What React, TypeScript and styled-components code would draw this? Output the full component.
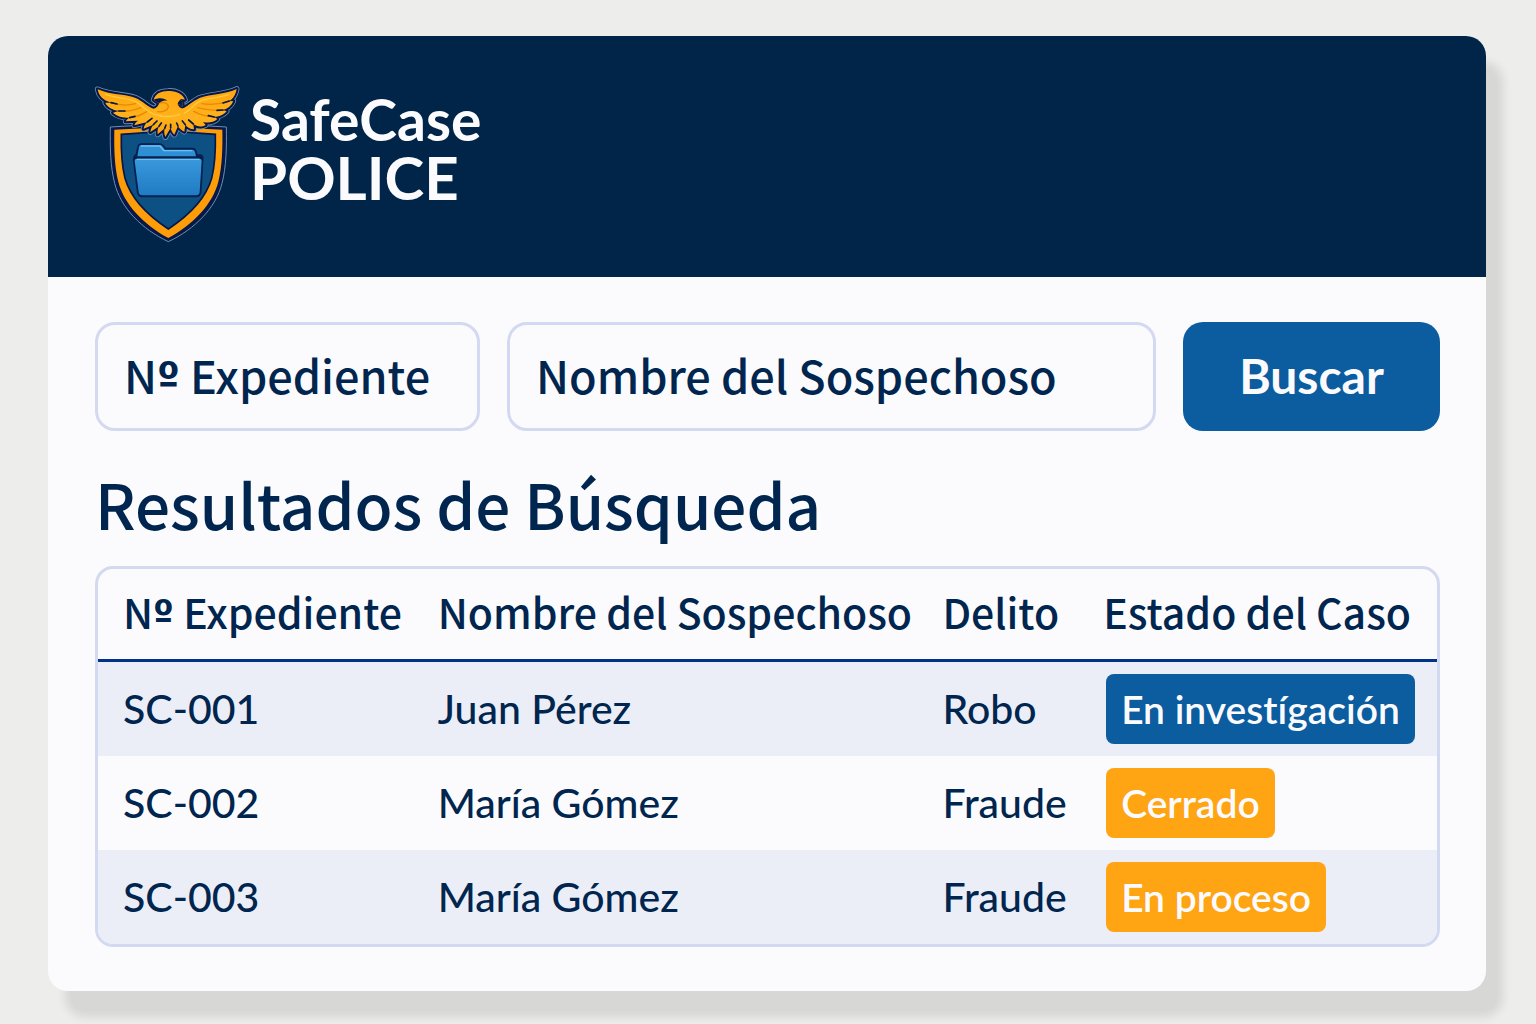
import React from "react";
import styled, { createGlobalStyle, css } from "styled-components";

const color = {
  navy: "#002548",
  ink: "#00264f",
  blue: "#0c5ca0",
  amber: "#ffa412",
  surface: "#fbfbfd",
  stripe: "#eceef7",
  border: "#d3d9f0",
  rule: "#00328a",
};

const sans = `"Noto Sans CJK SC", "Noto Sans", sans-serif`;
const lato = `Lato, "Noto Sans", sans-serif`;

const GlobalStyle = createGlobalStyle`
  *, *::before, *::after { box-sizing: border-box; }
  body {
    margin: 0;
    background: #ededec;
    color: ${color.ink};
    font-family: ${sans};
  }
`;

const Page = styled.div`
  padding: 36px 50px 33px 48px;
`;

const Card = styled.main`
  border-radius: 20px;
  background: ${color.surface};
  box-shadow: 17px 26px 8px rgba(40, 36, 32, 0.11);
`;

const Header = styled.header`
  display: flex;
  align-items: flex-start;
  gap: 10px;
  padding: 49px 46px 34px;
  border-radius: 20px 20px 0 0;
  background: ${color.navy};
`;

const Logo = styled.svg`
  display: block;
  flex: none;
  width: 146px;
  height: 158px;
`;

const Wordmark = styled.h1`
  display: flex;
  flex-direction: column;
  margin: 5px 0 0;
  color: ${color.surface};
  font-family: ${lato};
  font-size: 57px;
  font-weight: 700;
  line-height: 58px;
`;

const WordmarkCaps = styled.span`
  font-size: 60px;
`;

const Content = styled.div`
  padding: 45px 46px 44px 47px;
`;

const SearchForm = styled.form`
  display: grid;
  grid-template-columns: 385fr 649fr 257fr;
  gap: 27px;
`;

const Field = styled.div`
  display: grid;
  height: 109px;
  border: 3px solid ${color.border};
  border-radius: 20px;
  background: ${color.surface};

  &:focus-within {
    border-color: ${color.blue};
  }
`;

const fieldText = css`
  grid-area: 1 / 1;
  min-width: 0;
  padding: 0 26px 4px;
  font-family: ${sans};
  font-size: 45px;
  font-weight: 500;
  line-height: 99px;
`;

const FieldInput = styled.input`
  ${fieldText}
  width: 100%;
  border: 0;
  outline: 0;
  background: transparent;
  color: ${color.ink};

  &:not(:placeholder-shown) + label {
    visibility: hidden;
  }
`;

const FieldLabel = styled.label`
  ${fieldText}
  pointer-events: none;
  white-space: nowrap;
`;

const Ordinal = styled.span`
  font-family: "DejaVu Sans Condensed", "DejaVu Sans", sans-serif;
  font-weight: 700;
  line-height: 1px;
`;

const SearchButton = styled.button`
  padding: 0 0 2px;
  border: 0;
  border-radius: 20px;
  background: ${color.blue};
  color: ${color.surface};
  font-family: ${lato};
  font-size: 48px;
  font-weight: 700;
  cursor: pointer;
`;

const Title = styled.h2`
  margin: 35px 0 26px;
  font-size: 62px;
  font-weight: 500;
  line-height: 74px;
`;

const TableFrame = styled.div`
  overflow: hidden;
  border: 3px solid ${color.border};
  border-radius: 18px;
`;

const Table = styled.table`
  width: 100%;
  border-collapse: separate;
  border-spacing: 0;
  table-layout: fixed;
`;

const Column = styled.col<{ $share?: number }>`
  width: ${(p) => (p.$share ? `${p.$share}%` : "auto")};
`;

const HeadCell = styled.th`
  height: 93px;
  padding: 0 0 7px 25px;
  border-bottom: 3px solid ${color.rule};
  font-size: 41px;
  font-weight: 500;
  line-height: 60px;
  text-align: left;
  white-space: nowrap;
`;

const Row = styled.tr`
  &:nth-child(odd) {
    background: ${color.stripe};
  }
`;

const Cell = styled.td<{ $badge?: boolean }>`
  height: 94px;
  padding: 0 0 0 ${(p) => (p.$badge ? 28 : 25)}px;
  font-family: ${lato};
  font-size: 41px;
  font-weight: 500;
  line-height: 60px;
  white-space: nowrap;
`;

const Badge = styled.span<{ $tone: "blue" | "amber" }>`
  display: block;
  width: fit-content;
  padding: 0 15px;
  border-radius: 8px;
  background: ${(p) => color[p.$tone]};
  color: ${color.surface};
  font-size: 39px;
  font-weight: 600;
  font-variant-ligatures: none;
  line-height: 70px;
`;

const SHIELD =
  "M76 156 L250 146 L424 156 C425 215 424 275 411 325 C393 398 330 462 250 500 C170 462 107 398 89 325 C76 275 75 215 76 156 Z";
const SHIELD_GOLD =
  "M88 164 L250 156 L412 164 C413 218 412 272 400 320 C383 388 324 448 250 489 C176 448 117 388 100 320 C88 272 87 218 88 164 Z";
const SHIELD_INNER =
  "M109 178 L250 168 L391 178 C392 225 390 270 380 310 C363 369 311 422 250 462 C189 422 137 369 120 310 C110 270 108 225 109 178 Z";
const EAGLE =
  "M38 43 C75 60 120 57 150 68 C175 78 188 96 206 101 C214 100 220 92 223 84 C217 82 210 78 206 74 C211 56 228 48 249 48 C274 46 294 58 300 74 L286 72 C294 80 294 90 291 97 C290 92 284 88 278 88 C282 96 287 101 294 100 C308 94 326 76 345 68 C378 57 424 58 455 42 C452 58 446 70 433 78 L445 79 C438 93 428 102 414 105 L425 109 C414 121 402 125 388 126 L397 132 C384 144 368 144 354 141 L362 150 C348 158 335 154 325 147 L327 163 C314 162 306 156 301 149 L298 170 C288 165 282 160 279 153 L268 179 C261 172 258 165 257 158 L241 186 C237 176 237 168 239 160 L218 178 C217 168 218 161 222 154 L196 171 C197 162 200 156 205 149 L176 161 C177 153 181 147 187 141 L148 151 C150 145 153 141 159 137 L122 139 C125 134 129 130 134 128 C112 128 96 124 84 113 L101 108 C82 104 67 97 61 83 L78 83 C54 76 41 62 38 43 Z";

function SafeCaseLogo() {
  return (
    <Logo viewBox="27 30 438 474" role="img" aria-label="SafeCase Police">
      <defs>
        <linearGradient id="folder" x1="0" y1="0" x2="0" y2="1">
          <stop offset="0" stopColor="#3a98dc" />
          <stop offset="1" stopColor="#1f7cc4" />
        </linearGradient>
        <linearGradient id="gold" x1="0" y1="0" x2="0" y2="1">
          <stop offset="0" stopColor="#ffa70f" />
          <stop offset="0.6" stopColor="#ffb21c" />
          <stop offset="1" stopColor="#fb9c08" />
        </linearGradient>
      </defs>
      <path d={SHIELD} fill="#06174a" stroke="#6f8db2" strokeWidth="3" />
      <path d={SHIELD_GOLD} fill="#ff9d08" />
      <path d={SHIELD_INNER} fill="#0d5083" stroke="#06174a" strokeWidth="5" />
      <g strokeLinejoin="round">
        <path d={EAGLE} fill="#6f8db2" stroke="#6f8db2" strokeWidth="17" />
        <path d={EAGLE} fill="#06174a" stroke="#06174a" strokeWidth="12" />
        <path d={EAGLE} fill="url(#gold)" />
      </g>
      <g fill="none" stroke="#e88904" strokeWidth="4" strokeLinecap="round">
        <path d="M78 83 C104 92 130 92 152 86" />
        <path d="M101 108 C126 111 148 106 168 98" />
        <path d="M134 128 C156 126 172 118 186 109" />
        <path d="M433 78 C404 88 376 90 350 86" />
        <path d="M414 105 C386 109 362 104 338 98" />
        <path d="M388 126 C362 124 342 118 326 109" />
        <path d="M223 84 C236 80 250 84 250 96 C248 106 234 112 218 110" />
      </g>
      <g fill="none" stroke="#06174a" strokeWidth="5" strokeLinecap="round">
        <path d="M187 141 L201 130 M205 149 L216 138 M222 154 L229 144 M239 160 L243 150 M257 158 L257 148 M279 153 L275 144 M301 149 L292 138 M325 147 L311 135" />
        <path d="M78 83 L96 87 M101 108 L120 108 M134 128 L150 124 M433 78 L414 84 M414 105 L396 106 M388 126 L370 122" />
      </g>
      <g fill="none" stroke="#ffcb40" strokeWidth="4" strokeLinecap="round">
        <path d="M62 58 C98 72 134 68 156 82 C176 94 188 116 216 120 C240 128 262 126 284 118" />
        <path d="M432 58 C398 70 364 68 342 80 C322 92 316 106 298 114" />
      </g>
      <path d="M206 74 C222 67 238 68 248 78 C238 75 230 78 223 84 C217 82 210 78 206 74 Z" fill="#06174a" />
      <path d="M278 88 C279 78 288 70 300 74 L286 72 C294 80 294 90 291 97 C290 92 284 88 278 88 Z" fill="#06174a" />
      <g strokeLinejoin="round">
        <path
          d="M157 240 L162 216 Q163 210 169 210 L224 210 Q229 210 232 214 L240 224 L322 224 Q329 224 330 231 L333 243 L345 243 Q351 244 350 251 L344 351 Q343 361 333 361 L172 361 Q162 361 161 351 L149 254 Q149 246 157 240 Z"
          fill="#06204f"
          stroke="#06204f"
          strokeWidth="11"
        />
        <path
          d="M157 244 L162 216 Q163 210 169 210 L224 210 Q229 210 232 214 L240 224 L322 224 Q329 224 330 231 L333 244 Z"
          fill="#2f8fd4"
        />
        <path
          d="M156 251 L343 251 Q350 251 350 258 L344 351 Q343 361 333 361 L172 361 Q162 361 161 351 L149 258 Q149 251 156 251 Z"
          fill="url(#folder)"
        />
        <path d="M155 253 L344 253 M167 213 L225 213 L236 227 L322 227" fill="none" stroke="#6cc0f2" strokeWidth="4" />
      </g>
    </Logo>
  );
}

type Case = { id: string; name: string; crime: string; status: string; tone: "blue" | "amber" };

const cases: Case[] = [
  { id: "SC-001", name: "Juan Pérez", crime: "Robo", status: "En investígación", tone: "blue" },
  { id: "SC-002", name: "María Gómez", crime: "Fraude", status: "Cerrado", tone: "amber" },
  { id: "SC-003", name: "María Gómez", crime: "Fraude", status: "En proceso", tone: "amber" },
];

const CaseNumber = () => (
  <>
    N<Ordinal>º</Ordinal> Expediente
  </>
);

export default function App() {
  return (
    <>
      <GlobalStyle />
      <Page>
        <Card>
          <Header>
            <SafeCaseLogo />
            <Wordmark>
              <span>SafeCase</span>
              <WordmarkCaps>POLICE</WordmarkCaps>
            </Wordmark>
          </Header>
          <Content>
            <SearchForm onSubmit={(e) => e.preventDefault()}>
              <Field>
                <FieldInput id="case-number" type="text" placeholder=" " />
                <FieldLabel htmlFor="case-number">
                  <CaseNumber />
                </FieldLabel>
              </Field>
              <Field>
                <FieldInput id="suspect-name" type="text" placeholder=" " />
                <FieldLabel htmlFor="suspect-name">Nombre del Sospechoso</FieldLabel>
              </Field>
              <SearchButton type="submit">Buscar</SearchButton>
            </SearchForm>
            <Title>Resultados de Búsqueda</Title>
            <TableFrame>
              <Table>
                <colgroup>
                  <Column $share={23.5} />
                  <Column $share={37.7} />
                  <Column $share={12} />
                  <Column />
                </colgroup>
                <thead>
                  <tr>
                    <HeadCell scope="col">
                      <CaseNumber />
                    </HeadCell>
                    <HeadCell scope="col">Nombre del Sospechoso</HeadCell>
                    <HeadCell scope="col">Delito</HeadCell>
                    <HeadCell scope="col">Estado del Caso</HeadCell>
                  </tr>
                </thead>
                <tbody>
                  {cases.map((c) => (
                    <Row key={c.id}>
                      <Cell>{c.id}</Cell>
                      <Cell>{c.name}</Cell>
                      <Cell>{c.crime}</Cell>
                      <Cell $badge>
                        <Badge $tone={c.tone}>{c.status}</Badge>
                      </Cell>
                    </Row>
                  ))}
                </tbody>
              </Table>
            </TableFrame>
          </Content>
        </Card>
      </Page>
    </>
  );
}
